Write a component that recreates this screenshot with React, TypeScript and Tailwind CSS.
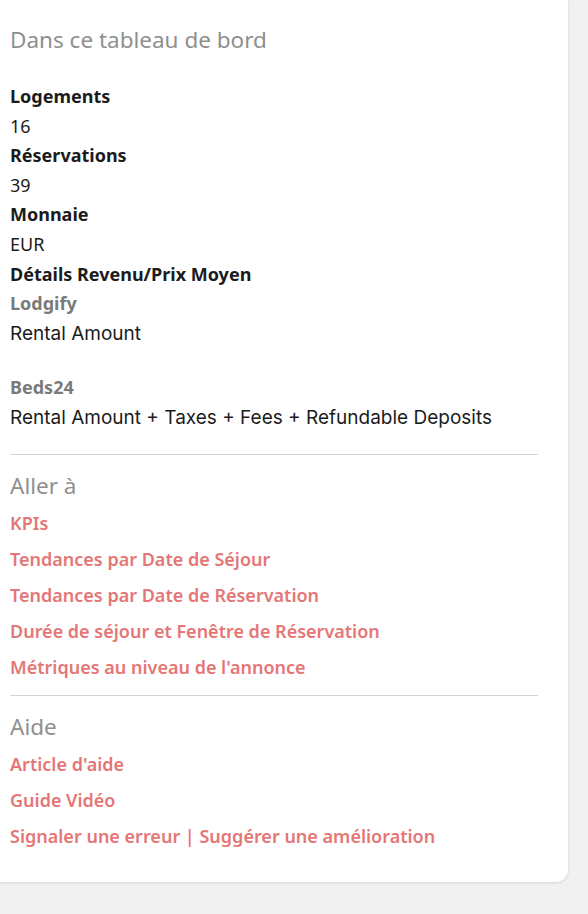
import React from 'react';

const details = [
  { label: 'Logements', value: '16' },
  { label: 'Réservations', value: '39' },
  { label: 'Monnaie', value: 'EUR' },
];

const jumpLinks = [
  'KPIs',
  'Tendances par Date de Séjour',
  'Tendances par Date de Réservation',
  'Durée de séjour et Fenêtre de Réservation',
  "Métriques au niveau de l'annonce",
];

const helpLinks = ["Article d'aide", 'Guide Vidéo', 'Signaler une erreur | Suggérer une amélioration'];

const SectionTitle: React.FC<{ children: React.ReactNode }> = ({ children }) => (
  <h2 className="text-[22.5px] leading-[28px] font-normal text-[#8f8f8f]">{children}</h2>
);

const LinkList: React.FC<{ items: string[] }> = ({ items }) => (
  <ul className="flex flex-col">
    {items.map((item) => (
      <li key={item} className="h-[36px] flex items-center">
        <a href="#" className="text-[18px] font-semibold text-[#e57676]">
          {item}
        </a>
      </li>
    ))}
  </ul>
);

export default function App() {
  return (
    <div className="min-h-screen bg-[#f1f1f1] pb-8" style={{ fontFamily: '"Noto Sans", Roboto, sans-serif' }}>
      <aside className="-mt-2 w-[568px] rounded-r-xl bg-white pl-[10px] pr-[30px] pt-[34px] pb-[27px] shadow-[0_1px_3px_rgba(0,0,0,0.12)]">
        <SectionTitle>Dans ce tableau de bord</SectionTitle>

        {/* Dashboard details */}
        <dl className="mt-[28px] text-[18px] leading-[29.6px] text-[#1b1b1b]">
          {details.map((d) => (
            <React.Fragment key={d.label}>
              <dt className="font-bold">{d.label}</dt>
              <dd>{d.value}</dd>
            </React.Fragment>
          ))}
          <dt className="font-bold">Détails Revenu/Prix Moyen</dt>
          <dd>
            <div className="font-bold text-[#7a7a7a]">Lodgify</div>
            <div className="text-[19px]" style={{ fontFamily: 'Inter, sans-serif' }}>Rental Amount</div>
            <div className="mt-[25px] font-bold text-[#7a7a7a]">Beds24</div>
            <div className="text-[19px]" style={{ fontFamily: 'Inter, sans-serif' }}>
              Rental Amount + Taxes + Fees + Refundable Deposits
            </div>
          </dd>
        </dl>

        <hr className="mt-[21px] border-[#d4d4d4]" />

        <div className="mt-[17px]">
          <SectionTitle>Aller à</SectionTitle>
          <div className="mt-[6px]">
            <LinkList items={jumpLinks} />
          </div>
        </div>

        <hr className="mt-[9px] border-[#d4d4d4]" />

        <div className="mt-[17px]">
          <SectionTitle>Aide</SectionTitle>
          <div className="mt-[6px]">
            <LinkList items={helpLinks} />
          </div>
        </div>
      </aside>
    </div>
  );
}
